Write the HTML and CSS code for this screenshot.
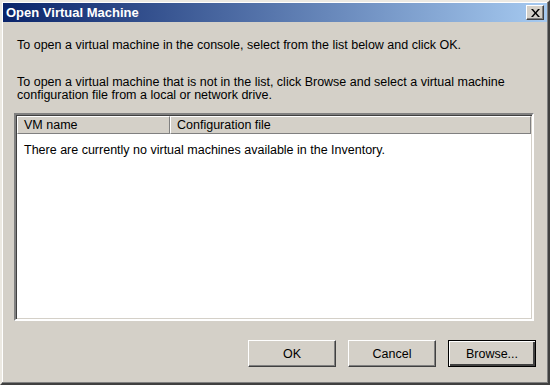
FILE: index.html
```html
<html>
    <head>
        <link rel="stylesheet" href="styles.css">
    </head>
    <body>
        <div class="window">
            <div class="titlebar">
                <span class="title">Open Virtual Machine</span>
                <button class="close" aria-label="Close">
                    <svg width="9" height="8" viewBox="0 0 9 8">
                        <path d="M0 0h2l2.5 3 2.5-3h2l-3.5 4 3.5 4h-2l-2.5-3-2.5 3h-2l3.5-4z" fill="#000" />
                    </svg>
                </button>
            </div>

            <div class="content">
                <p class="intro">To open a virtual machine in the console, select from the list below and click OK.</p>
                <p class="hint">
                    To open a virtual machine that is not in the list, click Browse and select a virtual machine
                    configuration file from a local or network drive.
                </p>

                <div class="list">
                    <div class="list-header">
                        <div class="col col--name">VM name</div>
                        <div class="col col--file">Configuration file</div>
                    </div>
                    <div class="list-body">
                        There are currently no virtual machines available in the Inventory.
                    </div>
                </div>

                <div class="actions">
                    <button class="btn">OK</button>
                    <button class="btn">Cancel</button>
                    <button class="btn btn--default">Browse...</button>
                </div>
            </div>
        </div>
    </body>
</html>
```

FILE: styles.css
```css
* {
    box-sizing: border-box;
}

body {
    margin: 0;
    background-color: #d4d0c8;
    font-family: "Liberation Sans", Arial, sans-serif;
    font-size: 12.5px;
    color: #000;
}

.window {
    width: 550px;
    height: 385px;
    padding: 1px;
    background-color: #d4d0c8;
    border: 2px solid;
    border-color: #ece9e2 #404040 #404040 #ece9e2;
    box-shadow: inset -1px -1px 0 #808080, inset 1px 1px 0 #fff;
    display: flex;
    flex-direction: column;
}

.titlebar {
    height: 19px;
    display: flex;
    align-items: center;
    justify-content: space-between;
    padding: 0 3px 0 3px;
    background: linear-gradient(to right, #0a246a, #a6caf0);
}

.title {
    color: #fff;
    font-weight: bold;
    font-size: 13px;
}

.close {
    width: 18px;
    height: 15px;
    padding: 0;
    display: flex;
    align-items: center;
    justify-content: center;
    background-color: #d4d0c8;
    border: 1px solid;
    border-color: #fff #404040 #404040 #fff;
    box-shadow: inset -1px -1px 0 #808080;
}

.content {
    flex: 1;
    display: flex;
    flex-direction: column;
    padding: 0 13px 0 11px;
}

.intro {
    margin: 16px 0 0 3px;
    line-height: 14px;
}

.hint {
    margin: 24px 0 0 3px;
    line-height: 13px;
}

.list {
    margin-top: 11px;
    height: 208px;
    background-color: #fff;
    border: 2px solid;
    border-color: #808080 #fff #fff #808080;
    box-shadow: inset 1px 1px 0 #404040, inset -1px -1px 0 #d4d0c8;
    padding: 1px;
}

.list-header {
    display: flex;
    height: 18px;
}

.col {
    background-color: #d4d0c8;
    border: 1px solid;
    border-color: #fff #808080 #808080 #fff;
    padding: 0 6px;
    line-height: 16px;
}

.col--name {
    width: 153px;
}

.col--file {
    flex: 1;
}

.list-body {
    padding: 9px 7px;
}

.actions {
    display: flex;
    justify-content: flex-end;
    gap: 12px;
    margin: 19px -2px 0 0;
}

.btn {
    width: 88px;
    height: 27px;
    font-family: inherit;
    font-size: 12.5px;
    background-color: #d4d0c8;
    border: 1px solid;
    border-color: #fff #404040 #404040 #fff;
    box-shadow: inset -1px -1px 0 #808080;
    padding: 0;
}

.btn--default {
    border: 1px solid #000;
    box-shadow: inset 1px 1px 0 #fff, inset -2px -2px 0 #404040, inset -1px -1px 0 #808080;
}
```
